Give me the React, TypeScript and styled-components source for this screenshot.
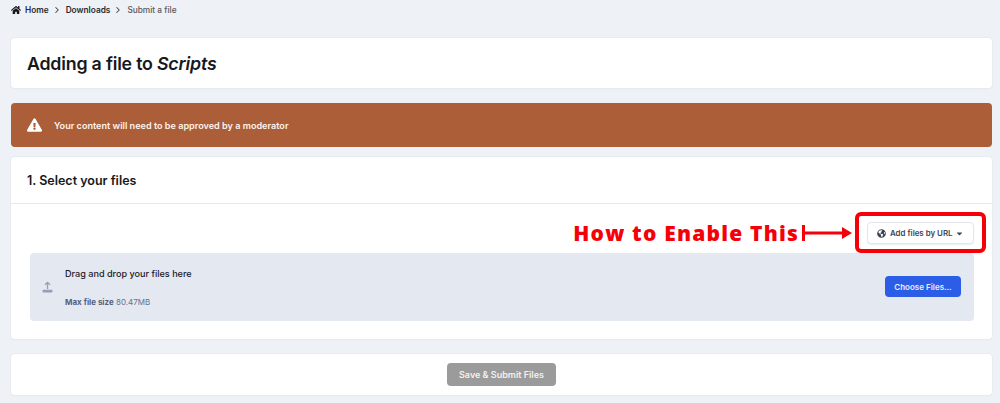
import React, { FC } from 'react';
import styled, { createGlobalStyle } from 'styled-components';
import { FaCaretDown, FaExclamationTriangle, FaGlobeAmericas, FaHome } from 'react-icons/fa';
import { FiChevronRight } from 'react-icons/fi';

const GlobalStyle = createGlobalStyle`
	html, body {
		margin: 0;
		height: 403px;
		overflow: hidden;
		background: #eef1f6;
		font-family: Inter, 'Liberation Sans', sans-serif;
		color: #17181c;
	}
`;

const Page = styled.div`
	display: flex;
	flex-direction: column;
	padding: 0 8px 0 11px;
`;

const Breadcrumb = styled.nav`
	align-items: center;
	display: flex;
	font-size: 8.3px;
	height: 20px;
	margin-bottom: 18px;
`;

const Crumb = styled.span<{ current?: boolean }>`
	color: ${({ current }) => (current ? '#55595f' : '#2a2c30')};
	font-weight: ${({ current }) => (current ? 500 : 600)};
`;

const HomeIcon = styled(FaHome)`
	color: #17181c;
	height: 10px;
	margin-right: 4px;
	width: 10px;
`;

const Separator = styled(FiChevronRight)`
	color: #3f4348;
	height: 10px;
	margin: 0 4px 0 3px;
	stroke-width: 2.5;
	width: 10px;
`;

const Card = styled.section`
	background: #fff;
	border-radius: 4px;
	box-shadow: 0 0 0 1px #e6eaf1, 0 1px 2px rgba(40, 50, 80, 0.06);
`;

const TitleCard = styled(Card)`
	align-items: center;
	display: flex;
	height: 50px;
	margin-bottom: 15px;
	padding-left: 16px;
`;

const Title = styled.h1`
	font-size: 17.8px;
	font-weight: 600;
	letter-spacing: -0.2px;
	margin: 0;

	em {
		font-style: italic;
	}
`;

const Alert = styled.div`
	align-items: center;
	background: #ab5e37;
	border-radius: 4px;
	color: #fbf3ee;
	display: flex;
	font-size: 9.1px;
	font-weight: 600;
	height: 44px;
	margin-bottom: 10px;
	padding-left: 16px;
`;

const AlertIcon = styled(FaExclamationTriangle)`
	color: #fff;
	height: 14px;
	margin-right: 12px;
	width: 15px;
`;

const SectionHeader = styled.header`
	align-items: center;
	border-bottom: 1px solid #e3e7ef;
	display: flex;
	font-size: 12.5px;
	font-weight: 600;
	height: 46px;
	padding-left: 16px;
`;

const SectionBody = styled.div`
	display: flex;
	flex-direction: column;
	height: 135px;
	padding: 18px 18px 0 19px;
	box-sizing: border-box;
`;

const Toolbar = styled.div`
	display: flex;
	justify-content: flex-end;
	margin-bottom: 9px;
	position: relative;
`;

const UrlButton = styled.button`
	align-items: center;
	background: #fff;
	border: 1px solid #e3e6ec;
	border-radius: 4px;
	box-shadow: 0 1px 1px rgba(40, 50, 80, 0.08);
	color: #3d4454;
	display: flex;
	font-family: inherit;
	font-size: 7.9px;
	font-weight: 600;
	height: 22px;
	padding: 0 9px 0 9px;
	white-space: nowrap;
	width: 107px;
	box-sizing: border-box;
`;

const GlobeIcon = styled(FaGlobeAmericas)`
	height: 9px;
	margin-right: 4px;
	width: 9px;
`;

const CaretIcon = styled(FaCaretDown)`
	height: 9px;
	margin-left: auto;
	width: 9px;
`;

const Highlight = styled.div`
	border: 4px solid #f50008;
	border-radius: 6px;
	bottom: -9px;
	box-sizing: border-box;
	position: absolute;
	right: -12px;
	top: -10px;
	width: 131px;
`;

const Annotation = styled.div`
	align-items: center;
	color: #f50008;
	display: flex;
	font-family: 'Open Sans', sans-serif;
	font-size: 21px;
	font-weight: 800;
	letter-spacing: 1.2px;
	line-height: 24px;
	position: absolute;
	right: 122px;
	top: -1px;
	white-space: nowrap;
`;

const ArrowDrawing = styled.svg`
	display: block;
	flex: none;
	margin-left: 3px;
`;

const DropZone = styled.div`
	align-items: center;
	background: #e4e8f1;
	border-radius: 4px;
	display: flex;
	height: 68px;
	padding: 0 13px 0 12px;
`;

const UploadDrawing = styled.svg`
	color: #94a0b8;
	display: block;
	flex: none;
	margin: 0 12px 0 0;
`;

const DropText = styled.div`
	display: flex;
	flex: 1;
	flex-direction: column;
	gap: 18px;
`;

const DropTitle = styled.div`
	color: #1e2026;
	font-size: 9.1px;
	font-weight: 500;
	line-height: 11px;
`;

const MaxSize = styled.div`
	color: #66718c;
	font-size: 8px;
	line-height: 10px;

	strong {
		color: #56617f;
		font-weight: 700;
	}
`;

const ChooseButton = styled.button`
	background: #2b5de6;
	border: 0;
	border-radius: 4px;
	color: #e9eefc;
	font-family: inherit;
	font-size: 8px;
	font-weight: 600;
	height: 21px;
	margin-bottom: 1px;
	padding: 0;
	width: 76px;
`;

const SubmitCard = styled(Card)`
	align-items: center;
	display: flex;
	height: 41px;
	justify-content: center;
	margin-top: 15px;
`;

const SubmitButton = styled.button`
	background: #9b9b9b;
	border: 0;
	border-radius: 4px;
	color: #f1f1f1;
	font-family: inherit;
	font-size: 9px;
	font-weight: 600;
	height: 23px;
	padding: 0;
	width: 109px;
`;

const App: FC = () => (
	<Page>
		<GlobalStyle />
		<Breadcrumb>
			<HomeIcon />
			<Crumb>Home</Crumb>
			<Separator />
			<Crumb>Downloads</Crumb>
			<Separator />
			<Crumb current>Submit a file</Crumb>
		</Breadcrumb>
		<TitleCard>
			<Title>
				Adding a file to <em>Scripts</em>
			</Title>
		</TitleCard>
		<Alert>
			<AlertIcon />
			Your content will need to be approved by a moderator
		</Alert>
		<Card>
			<SectionHeader>1. Select your files</SectionHeader>
			<SectionBody>
				<Toolbar>
					<Annotation>
						How to Enable This
						<ArrowDrawing width="50" height="16" viewBox="0 0 50 16">
							<path d="M1.5 0v16" stroke="#f50008" strokeWidth="3" />
							<path d="M1 8h42" stroke="#f50008" strokeWidth="3" />
							<path d="M40 2l10 6-10 6z" fill="#f50008" />
						</ArrowDrawing>
					</Annotation>
					<UrlButton>
						<GlobeIcon />
						Add files by URL
						<CaretIcon />
					</UrlButton>
					<Highlight />
				</Toolbar>
				<DropZone>
					<UploadDrawing width="11" height="12" viewBox="0 0 11 12">
						<path d="M5.5 8V1.5M3 3.8l2.5-2.5L8 3.8" fill="none" stroke="currentColor" strokeWidth="1.3" />
						<rect x="0.5" y="8.8" width="10" height="2.7" rx="1" fill="currentColor" />
					</UploadDrawing>
					<DropText>
						<DropTitle>Drag and drop your files here</DropTitle>
						<MaxSize>
							<strong>Max file size</strong> 80.47MB
						</MaxSize>
					</DropText>
					<ChooseButton>Choose Files...</ChooseButton>
				</DropZone>
			</SectionBody>
		</Card>
		<SubmitCard>
			<SubmitButton>Save &amp; Submit Files</SubmitButton>
		</SubmitCard>
	</Page>
);

export default App;
